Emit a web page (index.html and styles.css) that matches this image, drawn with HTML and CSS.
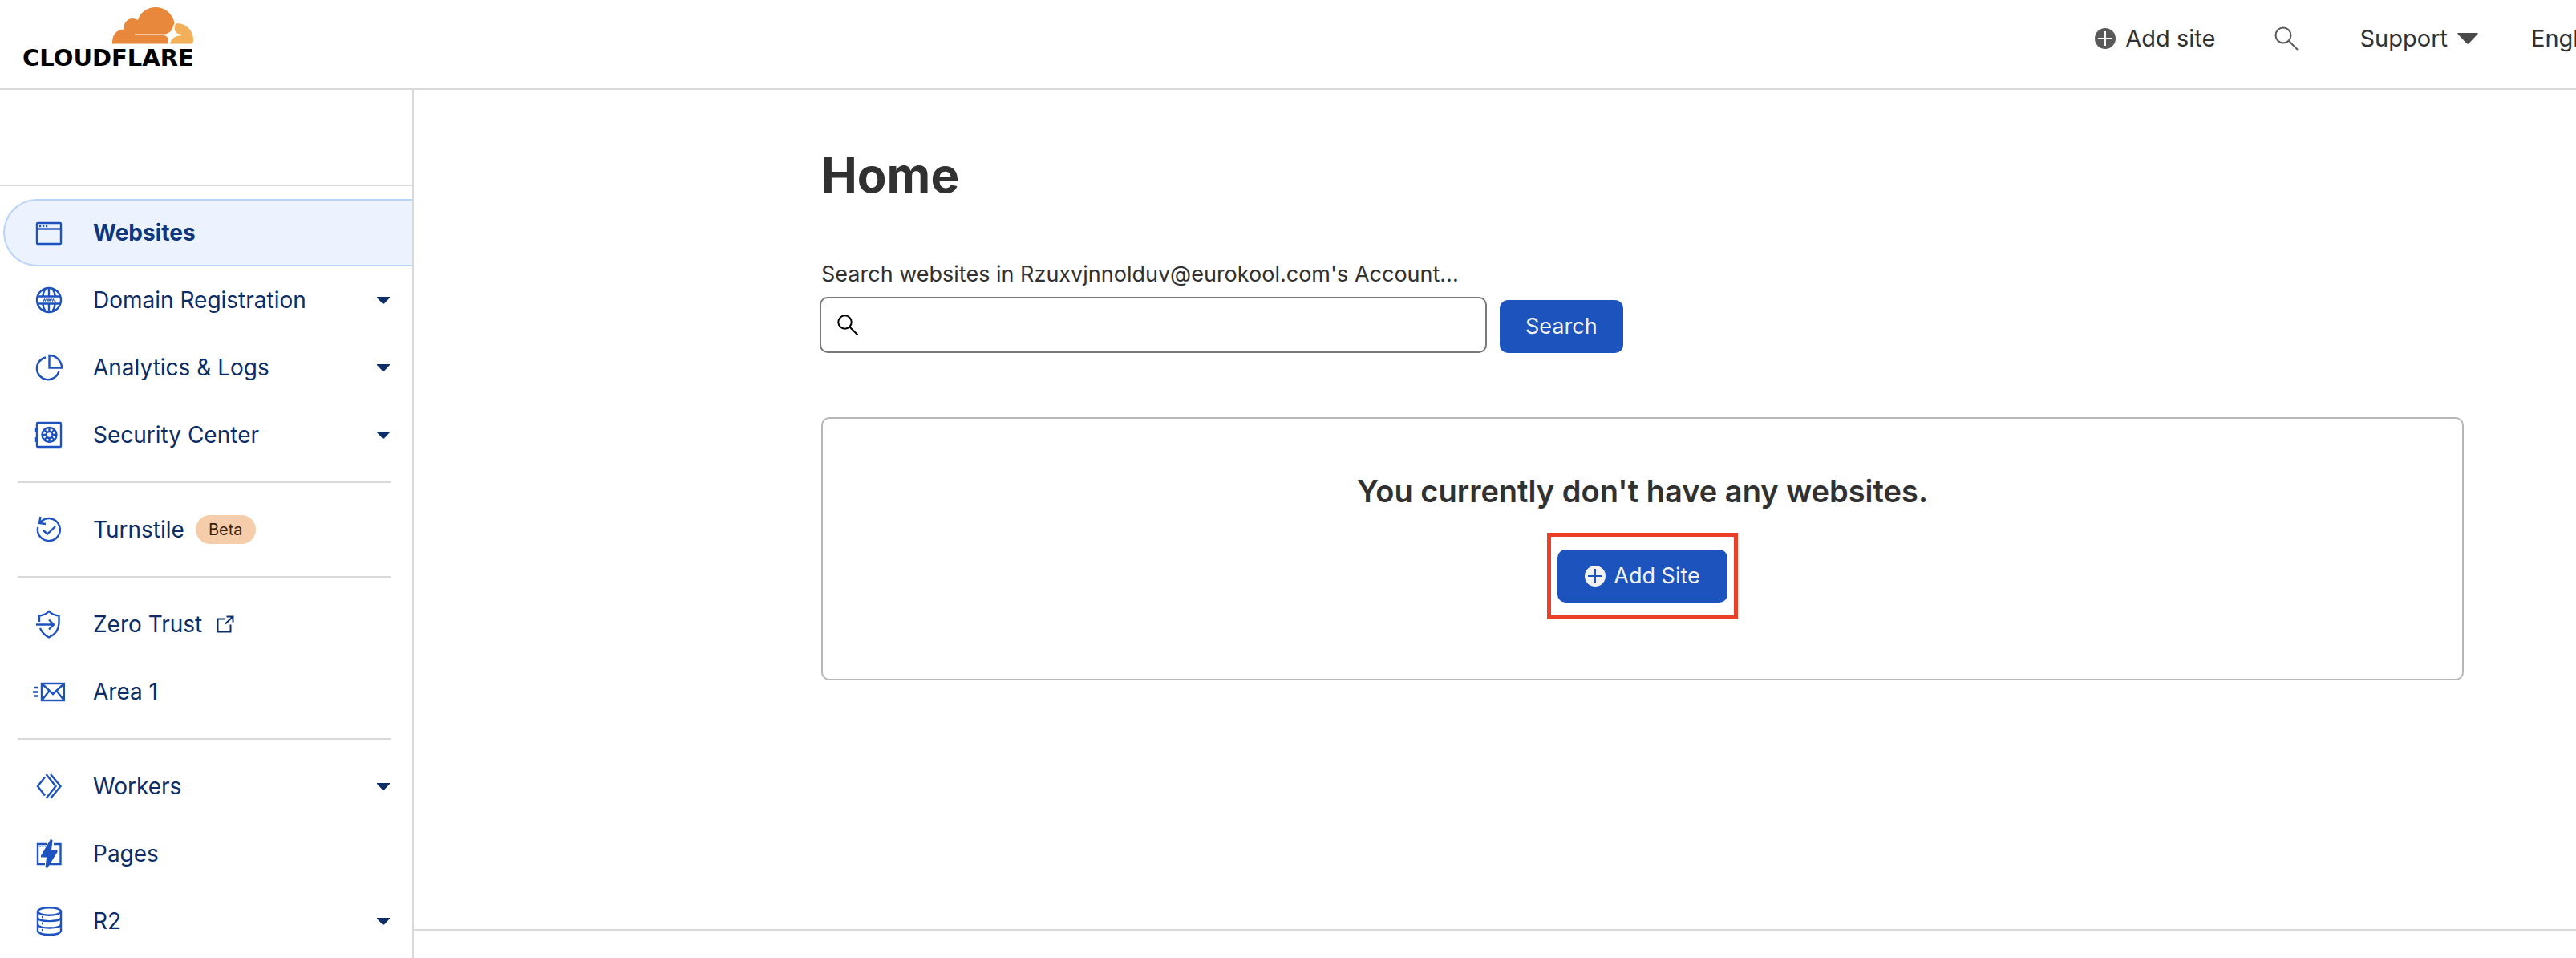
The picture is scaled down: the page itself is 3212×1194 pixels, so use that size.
FILE: index.html
```html
<!DOCTYPE html>
<html lang="en">
<head>
    <meta charset="UTF-8">
    <meta name="viewport" content="width=device-width, initial-scale=1.0">
    <title>Home | Cloudflare</title>
    <link rel="stylesheet" href="styles.css">
</head>
<body>
    <header class="topbar">
        <a class="logo" href="#">
            <svg class="logo-cloud" viewBox="0 0 102 46" width="102" height="46" aria-hidden="true">
                <path fill="#e8883c" d="M0 45.500C-.5 36 4 28 14.500 27.500C13.500 19 20 14 25 14C28 14 30 15 32 16C35 6 44 0 54 0C66 0 75 8 77.500 19C75 28 73 32 66 33.500H28V35H64C69 36 71 39 69 45.500Z"/>
                <path fill="#f2b05a" d="M79 20.500C92 19 102 30 101 42L100 45.500H72C73 40 77 36 84 35.500L92 34.500L84 33.500C78 32 76 28 79 20.500Z"/>
            </svg>
            <span class="logo-name">CLOUDFLARE</span>
        </a>
        <nav class="topnav">
            <button class="top-btn add-btn" type="button">
                <svg viewBox="0 0 26 26" width="26" height="26" aria-hidden="true"><circle cx="13" cy="13" r="13" fill="#595959"/><path d="M13 4v18M4 13h18" stroke="#fff" stroke-width="2"/></svg>
                Add site
            </button>
            <button class="top-btn find-btn" type="button" aria-label="Search">
                <svg viewBox="0 0 30 30" width="30" height="30" fill="none" stroke="#595959" stroke-width="2" aria-hidden="true"><circle cx="11" cy="11" r="9.500"/><path d="M18 18l11 11"/></svg>
            </button>
            <button class="top-btn support-btn" type="button">
                Support
                <svg viewBox="0 0 26 14" width="26" height="14" aria-hidden="true"><path fill="#4a4a4a" d="M1.500 0h23q2 0 .8 1.500L14.500 13q-1.500 1.500-3 0L.7 1.500Q-.5 0 1.500 0z"/></svg>
            </button>
            <button class="top-btn lang-btn" type="button">English</button>
        </nav>
    </header>

    <div class="layout">
        <aside class="sidebar">
            <div class="account"></div>
            <nav class="menu">
                <a class="item active" href="#">
                    <svg class="icon" viewBox="0 0 40 40"><rect x="5" y="8" width="30" height="26" rx="1"/><path d="M5 15.500h30"/><path d="M8 12h2.200M12 12h2.200M16 12h2.200"/></svg>
                    Websites
                </a>
                <a class="item" href="#">
                    <svg class="icon" viewBox="0 0 40 40"><circle cx="20" cy="20" r="15"/><path d="M6 15.500h28M6 24.500h28M20 5v10.500M20 24.500V35M16 5.500Q12.500 10 12.500 15.500M24 5.500Q27.500 10 27.500 15.500M16 34.500Q12.500 30 12.500 24.500M24 34.500Q27.500 30 27.500 24.500"/><path class="thin" d="M12.500 18.500l1 3 1-3 1 3 1-3M18 18.500l1 3 1-3 1 3 1-3M23.500 18.500l1 3 1-3 1 3M28 21.200v.8"/></svg>
                    Domain Registration
                    <svg class="caret" viewBox="0 0 16 9"><path d="M0 0h16v1L9 8.500H7L0 1z"/></svg>
                </a>
                <a class="item" href="#">
                    <svg class="icon" viewBox="0 0 40 40"><path d="M20.500 5v15.500H36A15.500 15.500 0 0 0 20.500 5z"/><path d="M16 7.500A14 14 0 1 0 32.500 24.500"/></svg>
                    Analytics &amp; Logs
                    <svg class="caret" viewBox="0 0 16 9"><path d="M0 0h16v1L9 8.500H7L0 1z"/></svg>
                </a>
                <a class="item" href="#">
                    <svg class="icon" viewBox="0 0 40 40"><rect x="5" y="5" width="30" height="30" rx="1"/><path d="M4 11v6M4 23v6"/><circle cx="20.500" cy="20" r="9"/><circle cx="20.500" cy="20" r="4"/><path d="M20.500 11v5M20.500 24v5M11.500 20h5M24.500 20h5M14 13.500l3.500 3.500M27 13.500L23.500 17M14 26.500l3.500-3.500M27 26.500L23.500 23"/></svg>
                    Security Center
                    <svg class="caret" viewBox="0 0 16 9"><path d="M0 0h16v1L9 8.500H7L0 1z"/></svg>
                </a>
                <hr class="divider">
                <a class="item" href="#">
                    <svg class="icon" viewBox="0 0 40 40"><path d="M6.200 17A14 14 0 1 0 12 8.500Q10.500 9.500 9.500 11"/><path d="M9.500 4L8 12l8 1"/><path d="M13 21l5 4.500L28 16"/></svg>
                    Turnstile
                    <span class="badge">Beta</span>
                </a>
                <hr class="divider">
                <a class="item" href="#">
                    <svg class="icon" viewBox="0 0 40 40"><path d="M8 17v-7.500Q15 9 20 4Q25 9 32.500 9.500V19Q32 31 20 36.500Q12.500 33 9 25"/><path d="M4 20.500h21M20 14.500l6 6-6 6"/></svg>
                    Zero Trust
                    <svg class="external" viewBox="0 0 22 22"><path d="M10 4.500H1.500V20.500H17.500V11.500M12.500 1.500H20.500V8.500M20.500 1.500L11 10.500"/></svg>
                </a>
                <a class="item" href="#">
                    <svg class="icon" viewBox="0 0 40 40"><rect x="11" y="10" width="28" height="21"/><path d="M11 10l14 13L39 10M11 31l9.500-12M39 31l-9.500-12M2 15h5M0 20.500h7M2 25.500h5"/></svg>
                    Area 1
                </a>
                <hr class="divider">
                <a class="item" href="#">
                    <svg class="icon" viewBox="0 0 40 40"><path d="M15 8.500L6 20l9 11.500M16.500 5L28.500 20l-12 15M22 5l12.500 15L22 35"/></svg>
                    Workers
                    <svg class="caret" viewBox="0 0 16 9"><path d="M0 0h16v1L9 8.500H7L0 1z"/></svg>
                </a>
                <a class="item" href="#">
                    <svg class="icon" viewBox="0 0 40 40"><path d="M17 8H6v25h9M26 8h8.500v25H19"/><path class="thin" d="M8 11h2M11.500 11h2M15 11h1"/><path class="solid" d="M22 2l2.500 1L23 16h7.500v2L18 38l-2.500-1L17 24.500H10v-2z"/></svg>
                    Pages
                </a>
                <a class="item" href="#">
                    <svg class="icon" viewBox="0 0 40 40"><ellipse cx="20.500" cy="8" rx="14.500" ry="4.800"/><path d="M6 8v24.500C8 38.500 33 38.500 35 32.500V8M6 16c2 5.500 27 5.500 29 0M6 24.300c2 5.500 27 5.500 29 0"/><path d="M11 15h1.500M11 23h1.500M11 31h1.500"/></svg>
                    R2
                    <svg class="caret" viewBox="0 0 16 9"><path d="M0 0h16v1L9 8.500H7L0 1z"/></svg>
                </a>
            </nav>
        </aside>

        <div class="content">
            <main class="main">
                <h1 class="title">Home</h1>
                <form class="search" onsubmit="return false">
                    <label class="search-label" for="site-search">Search websites in Rzuxvjnnolduv@eurokool.com's Account...</label>
                    <div class="search-row">
                        <div class="search-box">
                            <svg viewBox="0 0 26 26" width="26" height="26" fill="none" stroke="#000" stroke-width="2" aria-hidden="true"><circle cx="9.500" cy="9.500" r="8.200"/><path d="M15.500 15.500l10 10"/></svg>
                            <input class="search-input" type="text" id="site-search" name="search">
                        </div>
                        <button class="primary" type="submit">Search</button>
                    </div>
                </form>
                <section class="empty">
                    <h2 class="empty-title">You currently don't have any websites.</h2>
                    <div class="highlight">
                        <button class="primary with-icon" type="button">
                            <svg viewBox="0 0 26 26" width="26" height="26" aria-hidden="true"><circle cx="13" cy="13" r="13" fill="#f2f2f2"/><path d="M13 4v18M4 13h18" stroke="#1d53bd" stroke-width="2"/></svg>
                            Add Site
                        </button>
                    </div>
                </section>
            </main>
            <footer class="footer"></footer>
        </div>
    </div>
</body>
</html>
```
FILE: styles.css
```css
* {
    box-sizing: border-box;
}
body {
    margin: 0;
    min-height: 100vh;
    display: flex;
    flex-direction: column;
    background-color: #fff;
    color: #313131;
    font-family: Inter, "Liberation Sans", sans-serif;
    font-size: 28px;
    line-height: 36px;
}
button {
    font: inherit;
    cursor: pointer;
}

/* top bar */
.topbar {
    display: flex;
    justify-content: space-between;
    height: 112px;
    border-bottom: 2px solid #d9d9d9;
}
.logo {
    display: flex;
    flex-direction: column;
    align-items: flex-end;
    align-self: flex-start;
    padding: 9px 0 0 28px;
    color: #000;
    text-decoration: none;
}
.logo-cloud {
    display: block;
}
.logo-name {
    font-family: "DejaVu Sans", sans-serif;
    font-size: 29px;
    font-weight: 700;
    line-height: 34px;
}
.topnav {
    display: flex;
    align-items: center;
    height: 96px;
    font-size: 29px;
}
.top-btn {
    display: flex;
    align-items: center;
    padding: 0;
    border: 0;
    background: none;
    color: #313131;
    white-space: nowrap;
}
.add-btn {
    gap: 12px;
    margin-right: 74px;
}
.find-btn {
    margin-right: 76px;
}
.support-btn {
    gap: 12px;
    margin-right: 66px;
}
.lang-btn {
    width: 56px;
    overflow: hidden;
}

/* sidebar */
.layout {
    display: flex;
    flex: 1;
}
.sidebar {
    flex: 0 0 516px;
    border-right: 2px solid #d9d9d9;
}
.account {
    height: 120px;
    border-bottom: 2px solid #d9d9d9;
}
.menu {
    padding-top: 16px;
}
.item {
    display: flex;
    align-items: center;
    height: 84px;
    margin-left: 4px;
    padding: 0 28px 0 37px;
    color: #0c2d66;
    text-decoration: none;
}
.item.active {
    padding-left: 35px;
    border: 2px solid #b9d4fb;
    border-right: 0;
    border-radius: 42px 0 0 42px;
    background-color: #ecf3fe;
    color: #10367c;
    font-weight: 700;
}
.icon {
    flex: none;
    width: 40px;
    height: 40px;
    margin-right: 35px;
    fill: none;
    stroke: #1d52bf;
    stroke-width: 2.4;
}
.icon .thin {
    stroke-width: 1;
}
.icon .solid {
    fill: #1d52bf;
    stroke: none;
}
.caret {
    width: 16px;
    height: 9px;
    margin-left: auto;
    fill: #0c2d66;
}
.external {
    width: 22px;
    height: 22px;
    margin-left: 18px;
    fill: none;
    stroke: #0c2d66;
    stroke-width: 2;
}
.badge {
    margin-left: 14px;
    padding: 0 16px;
    border-radius: 18px;
    background-color: #f5cdab;
    color: #3f2109;
    font-size: 20px;
}
.divider {
    margin: 16px 26px 16px 22px;
    border: 0;
    border-top: 2px solid #d9d9d9;
}

/* main column */
.content {
    flex: 1;
    display: flex;
    flex-direction: column;
    min-width: 0;
}
.main {
    flex: 1;
    padding: 64px 140px 0 508px;
    font-size: 27px;
}
.title {
    margin: 0;
    font-size: 60px;
    font-weight: 700;
    line-height: 84px;
}
.search {
    margin-top: 64px;
}
.search-label {
    display: block;
}
.search-row {
    display: flex;
    align-items: flex-end;
    gap: 16px;
    margin: 10px 0 0 -2px;
}
.search-box {
    display: flex;
    align-items: center;
    gap: 16px;
    width: 832px;
    height: 70px;
    padding: 0 20px;
    border: 2px solid #797979;
    border-radius: 10px;
}
.search-input {
    flex: 1;
    border: 0;
    outline: 0;
    background: none;
    font: inherit;
}
.primary {
    display: flex;
    align-items: center;
    gap: 10px;
    height: 66px;
    padding: 0 32px;
    border: 0;
    border-radius: 10px;
    background-color: #1d53bd;
    color: #f2f2f2;
}
.primary.with-icon {
    padding: 0 34px;
}
.empty {
    display: flex;
    flex-direction: column;
    align-items: center;
    margin-top: 80px;
    padding: 64px 32px 74px;
    border: 2px solid #b6b6b6;
    border-radius: 10px;
}
.empty-title {
    margin: 0 0 26px;
    font-size: 38px;
    font-weight: 600;
    line-height: 52px;
}
.highlight {
    padding: 16px 8px;
    border: 5px solid #eb4027;
}
.footer {
    height: 36px;
    border-top: 2px solid #d9d9d9;
}
```
